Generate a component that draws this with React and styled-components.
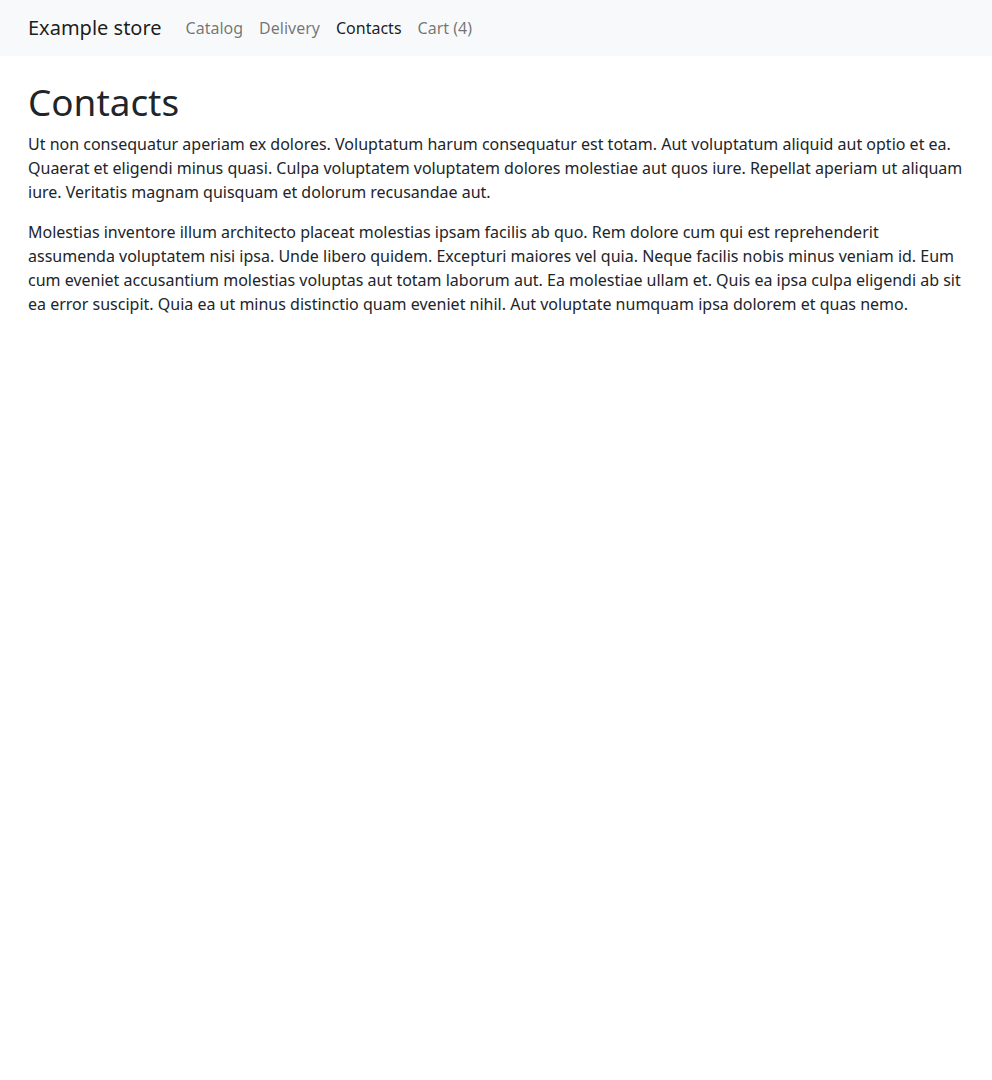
import styled, { createGlobalStyle } from "styled-components";

const GlobalStyle = createGlobalStyle`
  * {
    box-sizing: border-box;
  }
  body {
    margin: 0;
    font-family: "Noto Sans", "Liberation Sans", sans-serif;
    font-size: 16px;
    line-height: 1.5;
    color: #212529;
    background: #fff;
  }
`;

const Navbar = styled.nav`
  background-color: #f8f9fa;
  padding: 8px 0;
`;

const Container = styled.div`
  width: 100%;
  max-width: 960px;
  margin: 0 auto;
  padding: 0 12px;
`;

const NavInner = styled(Container)`
  display: flex;
  align-items: center;
`;

const Brand = styled.a`
  font-size: 20px;
  line-height: 30px;
  padding: 5px 0;
  margin-right: 16px;
  color: rgba(0, 0, 0, 0.9);
  text-decoration: none;
`;

const NavList = styled.ul`
  display: flex;
  list-style: none;
  margin: 0;
  padding: 0;
`;

const NavLink = styled.a`
  display: block;
  padding: 8px;
  line-height: 24px;
  text-decoration: none;
  color: ${(p) => (p.$active ? "rgba(0, 0, 0, 0.9)" : "rgba(0, 0, 0, 0.55)")};
`;

const Main = styled(Container)`
  margin-top: 24px;
`;

const Title = styled.h1`
  font-size: 36.88px;
  font-weight: 400;
  line-height: 1.2;
  margin: 0 0 8px;
`;

const Text = styled.p`
  margin: 0 0 16px;
`;

const links = [
  { label: "Catalog" },
  { label: "Delivery" },
  { label: "Contacts", active: true },
  { label: "Cart (4)" },
];

const App = () => {
  return (
    <>
      <GlobalStyle />
      <Navbar>
        <NavInner>
          <Brand href="#">Example store</Brand>
          <NavList>
            {links.map((l) => (
              <li key={l.label}>
                <NavLink href="#" $active={l.active}>
                  {l.label}
                </NavLink>
              </li>
            ))}
          </NavList>
        </NavInner>
      </Navbar>
      <Main>
        <Title>Contacts</Title>
        <Text>
          Ut non consequatur aperiam ex dolores. Voluptatum harum consequatur est
          totam. Aut voluptatum aliquid aut optio et ea. Quaerat et eligendi minus
          quasi. Culpa voluptatem voluptatem dolores molestiae aut quos iure.
          Repellat aperiam ut aliquam iure. Veritatis magnam quisquam et dolorum
          recusandae aut.
        </Text>
        <Text>
          Molestias inventore illum architecto placeat molestias ipsam facilis ab
          quo. Rem dolore cum qui est reprehenderit assumenda voluptatem nisi ipsa.
          Unde libero quidem. Excepturi maiores vel quia. Neque facilis nobis minus
          veniam id. Eum cum eveniet accusantium molestias voluptas aut totam
          laborum aut. Ea molestiae ullam et. Quis ea ipsa culpa eligendi ab sit ea
          error suscipit. Quia ea ut minus distinctio quam eveniet nihil. Aut
          voluptate numquam ipsa dolorem et quas nemo.
        </Text>
      </Main>
    </>
  );
};

export default App;
